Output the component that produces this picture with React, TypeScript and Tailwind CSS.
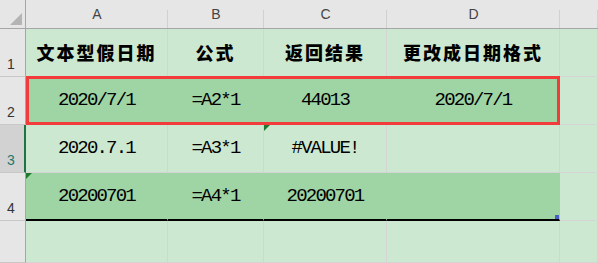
import React from 'react';

type Cell = { text?: string; head?: boolean; dark?: boolean; flag?: boolean };

const cols = ['A', 'B', 'C', 'D', ''];

const rows: { n: string; label?: boolean; active?: boolean; cells: Cell[] }[] = [
  {
    n: '1',
    cells: [
      { text: '文本型假日期', head: true },
      { text: '公式', head: true },
      { text: '返回结果', head: true },
      { text: '更改成日期格式', head: true },
      {},
    ],
  },
  {
    n: '2',
    cells: [
      { text: '2020/7/1', dark: true },
      { text: '=A2*1', dark: true },
      { text: '44013', dark: true },
      { text: '2020/7/1', dark: true },
      {},
    ],
  },
  {
    n: '3',
    active: true,
    cells: [{ text: '2020.7.1' }, { text: '=A3*1' }, { text: '#VALUE!', flag: true }, {}, {}],
  },
  {
    n: '4',
    cells: [
      { text: '20200701', dark: true, flag: true },
      { text: '=A4*1', dark: true },
      { text: '20200701', dark: true },
      { dark: true },
      {},
    ],
  },
  { n: '5', label: false, cells: [{}, {}, {}, {}, {}] },
];

const mono = "font-['Liberation_Mono',monospace] text-[19px] tracking-[-1.8px]";
const cjk = "font-['Noto_Sans_CJK_SC',sans-serif] font-black text-[18px] tracking-[2px]";

export default function App() {
  return (
    <div className="w-[598px] h-[263px] overflow-hidden bg-[#cde8d0] font-['Liberation_Sans',sans-serif]">
      <div className="relative grid grid-cols-[26px_142px_96px_123px_173px_1fr] grid-rows-[29px_48px_48px_48px_48px_1fr] h-[263px]">
        {/* corner */}
        <div className="relative bg-[#e6e6e6] border-r border-b border-[#a6a6a6]">
          <svg className="absolute right-[3px] bottom-[3px]" width="12" height="12" viewBox="0 0 12 12">
            <path d="M12 0 L12 12 L0 12 Z" fill="#b4b4b4" />
          </svg>
        </div>
        {/* column letters */}
        {cols.map((c, i) => (
          <div
            key={i}
            className="relative bg-[#e6e6e6] border-b border-[#a6a6a6] flex items-end justify-center pb-[3px] text-[14px] text-[#444]"
          >
            <span className="absolute right-0 top-[10px] bottom-0 w-px bg-[#d0d0d0]" />
            {c}
          </div>
        ))}

        {rows.map((r) => (
          <React.Fragment key={r.n}>
            <div
              className={`flex items-end pl-[7px] pb-px text-[14px] border-b border-[#c8c8c8] ${
                r.active
                  ? 'bg-[#d2d2d2] text-[#1e7a6a] border-r-2 border-r-[#217346]'
                  : 'bg-[#e6e6e6] text-[#333] border-r border-r-[#a6a6a6]'
              }`}
            >
              {r.label === false ? '' : r.n}
            </div>
            {r.cells.map((c, i) => (
              <div
                key={i}
                className={`relative flex items-center justify-center border-r border-b whitespace-nowrap text-black ${
                  c.dark ? 'bg-[#9fd4a4] border-[#9fd4a4]' : 'border-[#d4d4d4]'
                } ${r.n === '4' && i < 4 ? 'border-b-2 border-b-black' : ''} ${c.head ? cjk : mono}`}
              >
                {c.flag && (
                  <svg className="absolute left-0 top-0" width="6" height="6" viewBox="0 0 6 6">
                    <path d="M0 0 H6 L0 6 Z" fill="#1d7b2c" />
                  </svg>
                )}
                {r.n === '4' && i === 3 && (
                  <span className="absolute right-0 bottom-0 w-[4px] h-[4px] bg-[#4a5fc1]" />
                )}
                {c.text}
              </div>
            ))}
          </React.Fragment>
        ))}

        {/* selection outline around row 2 */}
        <div className="absolute left-0 right-0 -top-px bottom-0 col-start-2 col-end-6 row-start-3 row-end-4 border-[3px] border-[#f23b3b] pointer-events-none" />
      </div>
    </div>
  );
}
